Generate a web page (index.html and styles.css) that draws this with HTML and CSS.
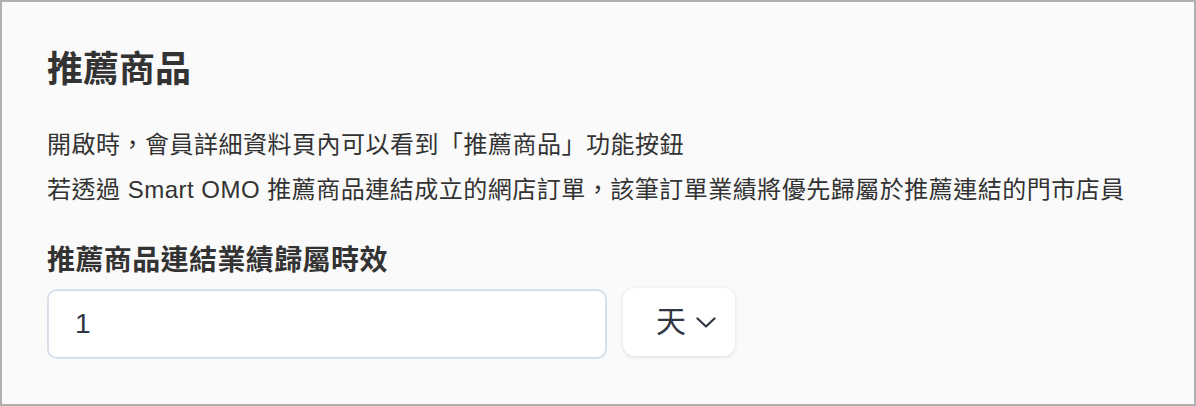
FILE: index.html
```html
<!DOCTYPE html>
<html lang="zh-Hant">
<head>
<meta charset="utf-8">
<link rel="stylesheet" href="styles.css">
</head>
<body>
<div class="panel">
  <h2 class="title">推薦商品</h2>
  <p class="desc">開啟時，會員詳細資料頁內可以看到「推薦商品」功能按鈕</p>
  <p class="desc">若透過 Smart OMO 推薦商品連結成立的網店訂單，該筆訂單業績將優先歸屬於推薦連結的門市店員</p>
  <div class="label">推薦商品連結業績歸屬時效</div>
  <div class="row">
    <div class="input">1</div>
    <div class="select">
      <span class="unit">天</span>
      <svg class="chev" width="20" height="11" viewBox="0 0 20 11"><path d="M1.5 1.5 L10 9.5 L18.5 1.5" fill="none" stroke="#2f3542" stroke-width="2.2" stroke-linecap="round" stroke-linejoin="round"/></svg>
    </div>
  </div>
</div>
</body>
</html>
```

FILE: styles.css
```css
html, body {
  margin: 0;
  padding: 0;
}
body {
  font-family: "Liberation Sans", "Noto Sans CJK TC", sans-serif;
  color: #333;
}
.panel {
  box-sizing: border-box;
  width: 1196px;
  height: 406px;
  border: 2px solid #b0b0b0;
  background: #fafafa;
  padding: 46px 0 0 45px;
}
.title {
  margin: 0;
  font-size: 36px;
  line-height: 44px;
  font-weight: 700;
  color: #333;
}
.desc {
  margin: 0;
  font-size: 24px;
  line-height: 45px;
  letter-spacing: 0.5px;
  color: #333;
}
.title + .desc {
  margin-top: 30px;
}
.label {
  margin-top: 32px;
  font-size: 28px;
  line-height: 34px;
  font-weight: 700;
  letter-spacing: 0.4px;
  color: #333;
}
.row {
  display: flex;
  align-items: flex-start;
  gap: 16px;
  margin-top: 11px;
}
.input {
  box-sizing: border-box;
  width: 560px;
  height: 70px;
  border: 2px solid #d6e0ea;
  border-radius: 10px;
  background: #fff;
  padding-left: 26px;
  display: flex;
  align-items: center;
  font-size: 28px;
  color: #2f3542;
}
.select {
  box-sizing: border-box;
  width: 112px;
  height: 68px;
  margin-top: -1px;
  border-radius: 12px;
  background: #fff;
  box-shadow: 0 1px 4px rgba(0, 0, 0, 0.12);
  display: flex;
  align-items: center;
  padding-left: 33px;
  gap: 10px;
  color: #2f3542;
}
.unit {
  font-size: 30px;
  line-height: 34px;
  font-weight: 400;
}
.chev {
  display: block;
}
```
